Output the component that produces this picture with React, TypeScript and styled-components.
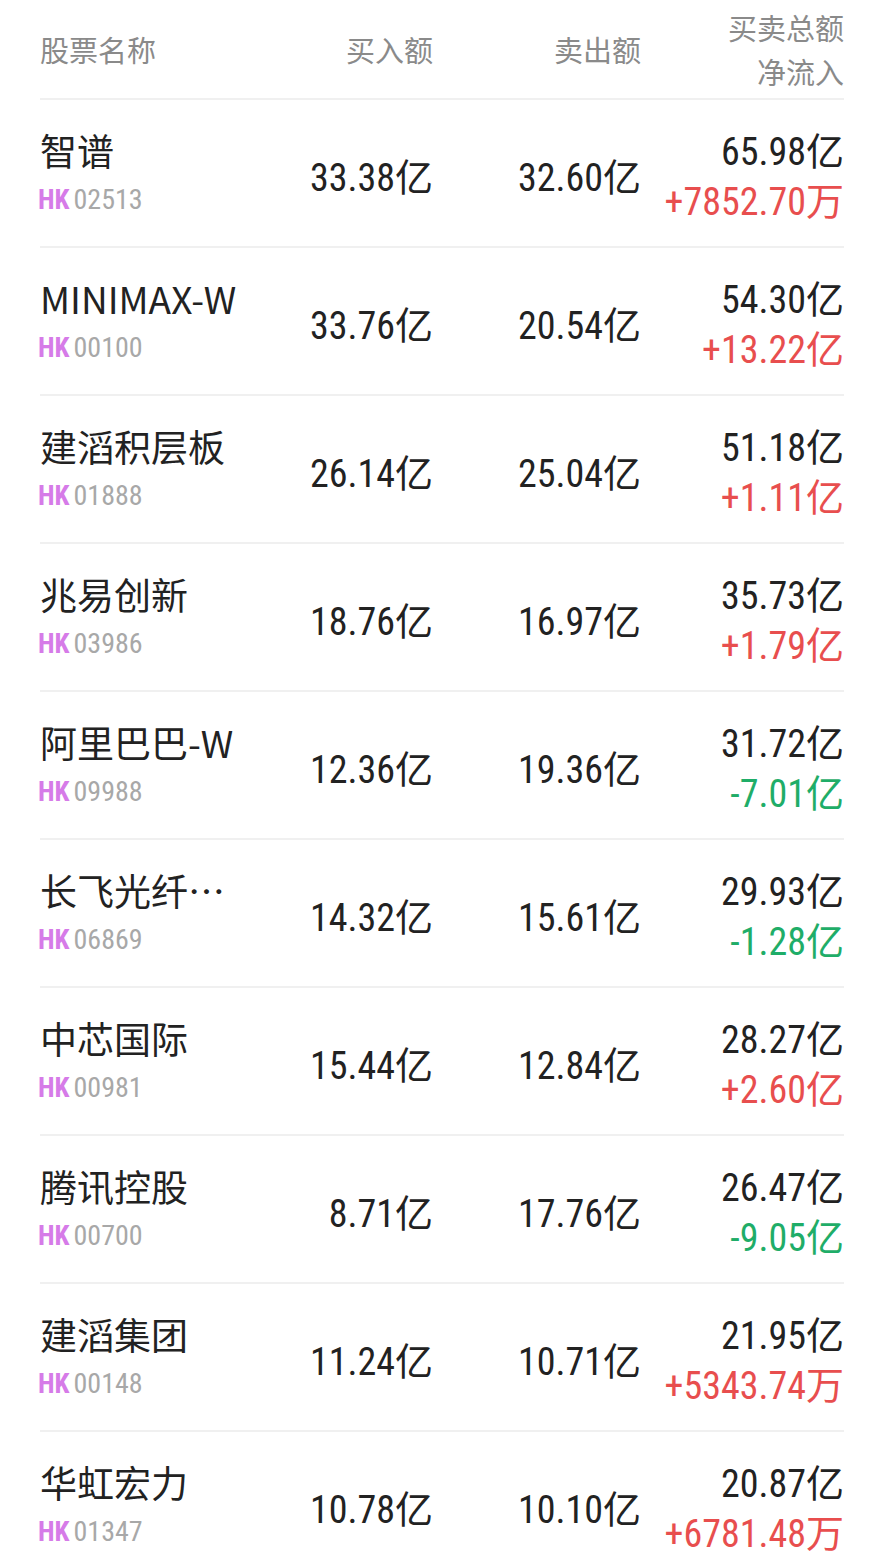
import React, { FC } from "react";
import styled, { createGlobalStyle } from "styled-components";

const GlobalStyle = createGlobalStyle`
  html, body {
    margin: 0;
    padding: 0;
    background: #fff;
  }
  body {
    font-family: "Noto Sans CJK SC", "Noto Sans", sans-serif;
    color: #222;
  }
`;

const NUM_FONT = `"Liberation Sans Narrow", "Roboto Condensed", "DejaVu Sans Condensed", "Noto Sans CJK SC", sans-serif`;

type Stock = {
  name: string;
  code: string;
  buy: string;
  sell: string;
  total: string;
  net: string;
};

const stocks: Stock[] = [
  { name: "智谱", code: "02513", buy: "33.38亿", sell: "32.60亿", total: "65.98亿", net: "+7852.70万" },
  { name: "MINIMAX-W", code: "00100", buy: "33.76亿", sell: "20.54亿", total: "54.30亿", net: "+13.22亿" },
  { name: "建滔积层板", code: "01888", buy: "26.14亿", sell: "25.04亿", total: "51.18亿", net: "+1.11亿" },
  { name: "兆易创新", code: "03986", buy: "18.76亿", sell: "16.97亿", total: "35.73亿", net: "+1.79亿" },
  { name: "阿里巴巴-W", code: "09988", buy: "12.36亿", sell: "19.36亿", total: "31.72亿", net: "-7.01亿" },
  { name: "长飞光纤…", code: "06869", buy: "14.32亿", sell: "15.61亿", total: "29.93亿", net: "-1.28亿" },
  { name: "中芯国际", code: "00981", buy: "15.44亿", sell: "12.84亿", total: "28.27亿", net: "+2.60亿" },
  { name: "腾讯控股", code: "00700", buy: "8.71亿", sell: "17.76亿", total: "26.47亿", net: "-9.05亿" },
  { name: "建滔集团", code: "00148", buy: "11.24亿", sell: "10.71亿", total: "21.95亿", net: "+5343.74万" },
  { name: "华虹宏力", code: "01347", buy: "10.78亿", sell: "10.10亿", total: "20.87亿", net: "+6781.48万" },
];

const Page = styled.div`
  width: 879px;
  height: 1558px;
  overflow: hidden;
  background: #fff;
  padding: 0 35px 0 40px;
  box-sizing: border-box;
`;

const Grid = styled.div`
  display: grid;
  grid-template-columns: 200px 193px 208px 203px;
`;

const HeaderRow = styled(Grid)`
  height: 98px;
  align-items: center;
  border-bottom: 2px solid #f0f0f0;
`;

const HeadCell = styled.div<{ $align?: "left" | "right" }>`
  font-size: 29px;
  line-height: 44px;
  color: #8a8a8a;
  text-align: ${({ $align }) => $align || "right"};
  white-space: nowrap;
`;

const Row = styled(Grid)`
  height: 146px;
  align-items: center;
  border-bottom: 2px solid #f0f0f0;
`;

const NameCell = styled.div`
  display: flex;
  flex-direction: column;
  gap: 12px;
  margin-top: -2px;
`;

const Name = styled.div`
  font-size: 37px;
  line-height: 44px;
  color: #222;
  white-space: nowrap;
`;

const Code = styled.div`
  display: flex;
  align-items: baseline;
  gap: 4px;
  margin-left: -2px;
  font-family: ${NUM_FONT};
  font-size: 28px;
  line-height: 32px;
  color: #a8a8a8;
`;

const Market = styled.span`
  color: #d67be8;
  font-weight: 700;
  font-family: "Roboto Condensed", "Roboto", sans-serif;
  font-size: 27px;
`;

const Num = styled.div<{ $color?: string }>`
  font-family: ${NUM_FONT};
  font-size: 38px;
  line-height: 50px;
  text-align: right;
  white-space: nowrap;
  color: ${({ $color }) => $color || "#222"};
`;

const BuySell = styled(Num)`
  margin-top: 10px;
`;

const TotalCell = styled.div`
  display: flex;
  flex-direction: column;
  align-items: flex-end;
  margin-top: 8px;
`;

const netColor = (v: string) => (v.startsWith("-") ? "#1fad68" : "#e84e4e");

const App: FC = () => {
  return (
    <>
      <GlobalStyle />
      <Page>
        <HeaderRow>
          <HeadCell $align="left">股票名称</HeadCell>
          <HeadCell>买入额</HeadCell>
          <HeadCell>卖出额</HeadCell>
          <HeadCell>
            买卖总额
            <br />
            净流入
          </HeadCell>
        </HeaderRow>
        {stocks.map((s) => (
          <Row key={s.code}>
            <NameCell>
              <Name>{s.name}</Name>
              <Code>
                <Market>HK</Market>
                {s.code}
              </Code>
            </NameCell>
            <BuySell>{s.buy}</BuySell>
            <BuySell>{s.sell}</BuySell>
            <TotalCell>
              <Num>{s.total}</Num>
              <Num $color={netColor(s.net)}>{s.net}</Num>
            </TotalCell>
          </Row>
        ))}
      </Page>
    </>
  );
};

export default App;
